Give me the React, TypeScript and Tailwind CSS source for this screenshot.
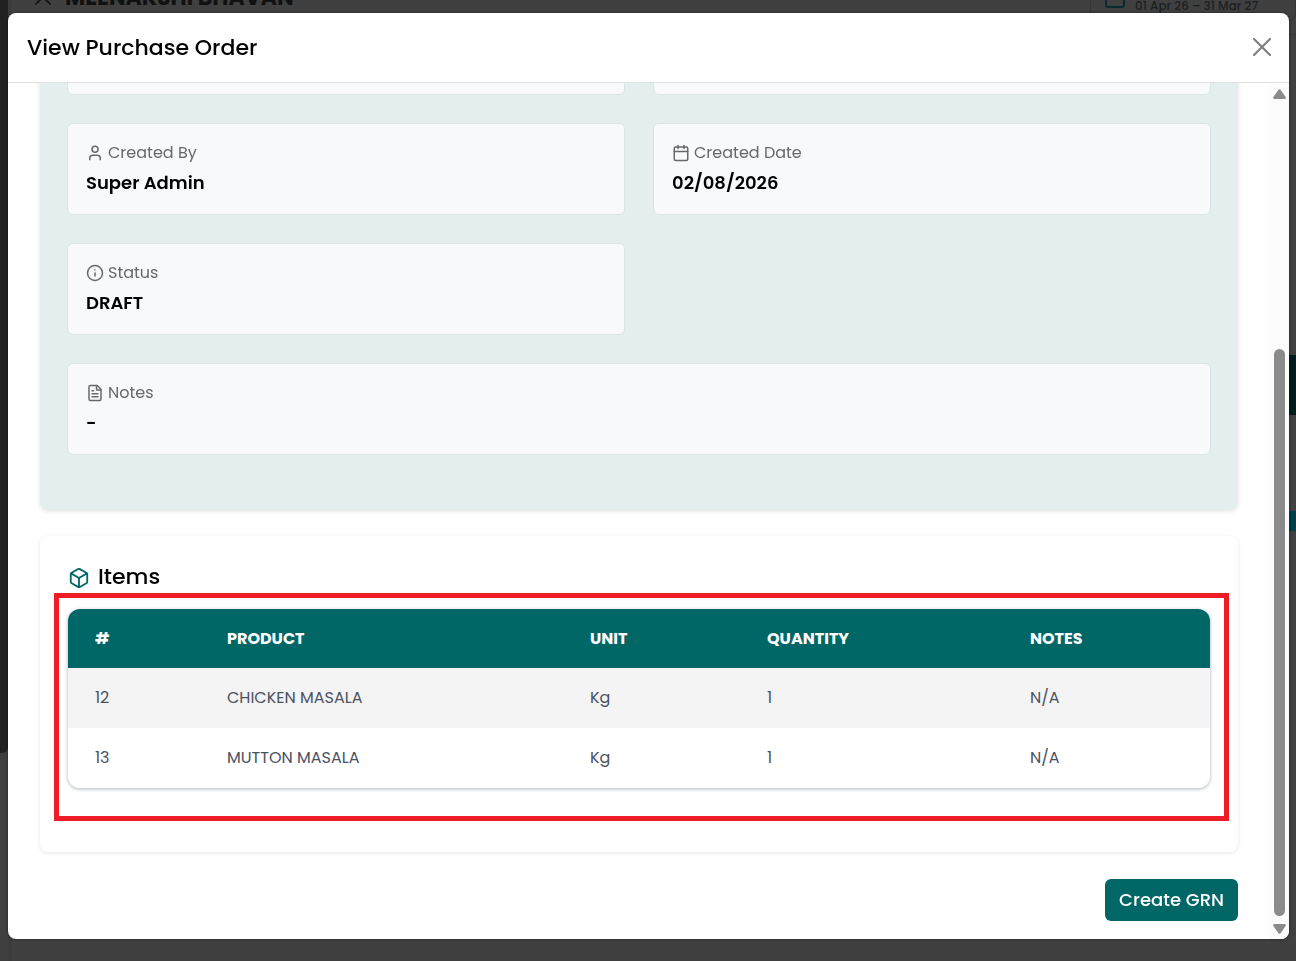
import React from 'react';
import { Box, Calendar, FileText, Info, User, X } from 'lucide-react';

interface FieldProps {
  icon: React.ReactNode;
  label: string;
  value: string;
  wide?: boolean;
}

const ITEMS = [
  { id: 12, product: 'CHICKEN MASALA', unit: 'Kg', quantity: 1, notes: 'N/A' },
  { id: 13, product: 'MUTTON MASALA', unit: 'Kg', quantity: 1, notes: 'N/A' }
];

function Field({ icon, label, value, wide }: FieldProps) {
  return (
    <div
      className={`rounded-md border border-[#dbe3e7] bg-[#f8f9fb] px-[18px] py-[17px] ${wide ? 'col-span-2' : ''}`}
    >
      <dt className="flex h-6 items-center gap-1 text-[16px] text-[#65696d]">
        {icon}
        {label}
      </dt>
      <dd className="mt-1 h-7 text-[18px] leading-7 font-semibold text-black">{value}</dd>
    </div>
  );
}

// The dimmed page behind the dialog
function Backdrop() {
  return (
    <div aria-hidden="true" className="flex h-screen overflow-hidden bg-[#404040]">
      <div className="h-[753px] w-2 shrink-0 rounded-br-md bg-[#212121]" />
      <div className="flex min-w-0 flex-1 flex-col border-l-4 border-[#3c3c3c]">
        <div className="-mt-10 flex h-[75px] shrink-0 items-center justify-between border-b border-[#383838] pl-[17px]">
          <div className="flex items-center gap-2 text-[#111111]">
            <X size={28} strokeWidth={1.5} />
            <span className="text-[22px] font-bold">MEENAKSHI BHAVAN</span>
          </div>
          <div className="flex h-12 w-[206px] items-center gap-2 rounded-lg border border-[#353535] pl-3 text-[#1c1f22]">
            <Calendar size={24} className="text-[#0a2a30]" />
            <span className="pt-[18px] text-[12px] leading-[18px] font-medium">01 Apr 26 – 31 Mar 27</span>
          </div>
        </div>
        <div className="flex flex-col items-end pt-80">
          <div className="h-[60px] w-20 bg-[#001c1a]" />
          <div className="mt-24 h-5 w-20 bg-[#003e49]" />
        </div>
      </div>
    </div>
  );
}

function Scrollbar() {
  return (
    <div aria-hidden="true" className="flex w-[19px] shrink-0 flex-col items-center bg-[#fcfcfc] pt-1.5 pb-[5px]">
      <svg width="13" height="10" viewBox="0 0 13 10" fill="#8b8b8b">
        <path d="M5.4 0.8Q6.5-.4 7.6.8L12.6 8Q13.2 10 11.6 10H1.4Q-.2 10 .4 8Z" />
      </svg>
      <div className="mt-auto h-[567px] w-[11px] rounded-full bg-[#8b8b8b]" />
      <svg className="mt-2" width="13" height="10" viewBox="0 0 13 10" fill="#8b8b8b">
        <path d="M5.4 9.2Q6.5 10.4 7.6 9.2L12.6 2Q13.2 0 11.6 0H1.4Q-.2 0 .4 2Z" />
      </svg>
    </div>
  );
}

function ItemsTable() {
  return (
    <div className="relative">
      <div className="overflow-hidden rounded-xl shadow-[0_1px_3px_1px_rgba(40,60,90,0.25)]">
        <table className="w-full table-fixed text-left text-[16px]">
          <thead className="bg-[#006666] text-white">
            <tr className="h-[59px]">
              <th className="w-[132px] pl-[27px] font-bold">#</th>
              <th className="w-[363px] pl-[27px] font-bold">PRODUCT</th>
              <th className="w-[177px] pl-[27px] font-bold">UNIT</th>
              <th className="w-[263px] pl-[27px] font-bold">QUANTITY</th>
              <th className="w-[207px] pl-[27px] font-bold">NOTES</th>
            </tr>
          </thead>
          <tbody className="text-[#4a5161]">
            {ITEMS.map((item) => (
              <tr key={item.id} className="h-[60px] odd:bg-[#f4f4f4] even:bg-white">
                <td className="pl-[27px]">{item.id}</td>
                <td className="pl-[27px]">{item.product}</td>
                <td className="pl-[27px]">{item.unit}</td>
                <td className="pl-[27px]">{item.quantity}</td>
                <td className="pl-[27px]">{item.notes}</td>
              </tr>
            ))}
          </tbody>
        </table>
      </div>
      {/* Highlight frame around the table */}
      <div className="pointer-events-none absolute -top-4 -right-[19px] -bottom-[33px] -left-3.5 border-5 border-[#ee1c25]" />
    </div>
  );
}

export default function App() {
  return (
    <div className="font-[Poppins,Inter,sans-serif]">
      <Backdrop />
      <div className="fixed inset-0 flex pt-[13px] pr-[7px] pb-[22px] pl-2">
        <div
          role="dialog"
          aria-labelledby="dialog-title"
          className="flex min-w-0 flex-1 flex-col overflow-hidden rounded-lg bg-white shadow-[0_0_3px_rgba(0,0,0,0.5)]"
        >
          <header className="flex h-[70px] shrink-0 items-center justify-between border-b border-[#dee2e6] pr-3.5 pb-px pl-[19px]">
            <h1 id="dialog-title" className="text-[22px] font-medium text-black">
              View Purchase Order
            </h1>
            <button type="button" aria-label="Close" className="text-[#7f7f7f]">
              <svg width="26" height="26" viewBox="0 0 26 26" fill="none" stroke="currentColor" strokeWidth="2.2" strokeLinecap="round">
                <path d="M5 5l16 16M21 5L5 21" />
              </svg>
            </button>
          </header>

          <div className="flex min-h-0 flex-1">
            <main className="flex min-w-0 flex-1 flex-col justify-end overflow-hidden px-8 pb-[18px]">
              <dl className="grid shrink-0 grid-cols-2 gap-7 rounded-b-lg bg-[#e5eeef] px-[27px] pb-[54px] shadow-[0_2px_5px_rgba(0,0,0,0.12)]">
                {/* Lower edge of the row scrolled under the header */}
                <div className="h-24 rounded-md border border-[#dbe3e7] bg-[#f8f9fb]" />
                <div className="h-24 rounded-md border border-[#dbe3e7] bg-[#f8f9fb]" />
                <Field icon={<User size={18} />} label="Created By" value="Super Admin" />
                <Field icon={<Calendar size={18} />} label="Created Date" value="02/08/2026" />
                <Field icon={<Info size={18} />} label="Status" value="DRAFT" />
                <Field icon={<FileText size={18} />} label="Notes" value="-" wide />
              </dl>

              <section className="mt-[27px] shrink-0 rounded-lg bg-white px-7 pt-7 pb-16 shadow-[0_1px_4px_rgba(0,0,0,0.1)]">
                <h2 className="mb-[21px] flex h-6 items-center gap-2 text-[22px] font-medium text-black">
                  <Box size={22} className="mt-1 text-[#006666]" />
                  Items
                </h2>
                <ItemsTable />
              </section>

              <button
                type="button"
                className="mt-[27px] h-[42px] shrink-0 self-end rounded-md bg-[#006666] px-3.5 pb-px text-[18px] font-medium text-white"
              >
                Create GRN
              </button>
            </main>
            <Scrollbar />
          </div>
        </div>
      </div>
    </div>
  );
}
